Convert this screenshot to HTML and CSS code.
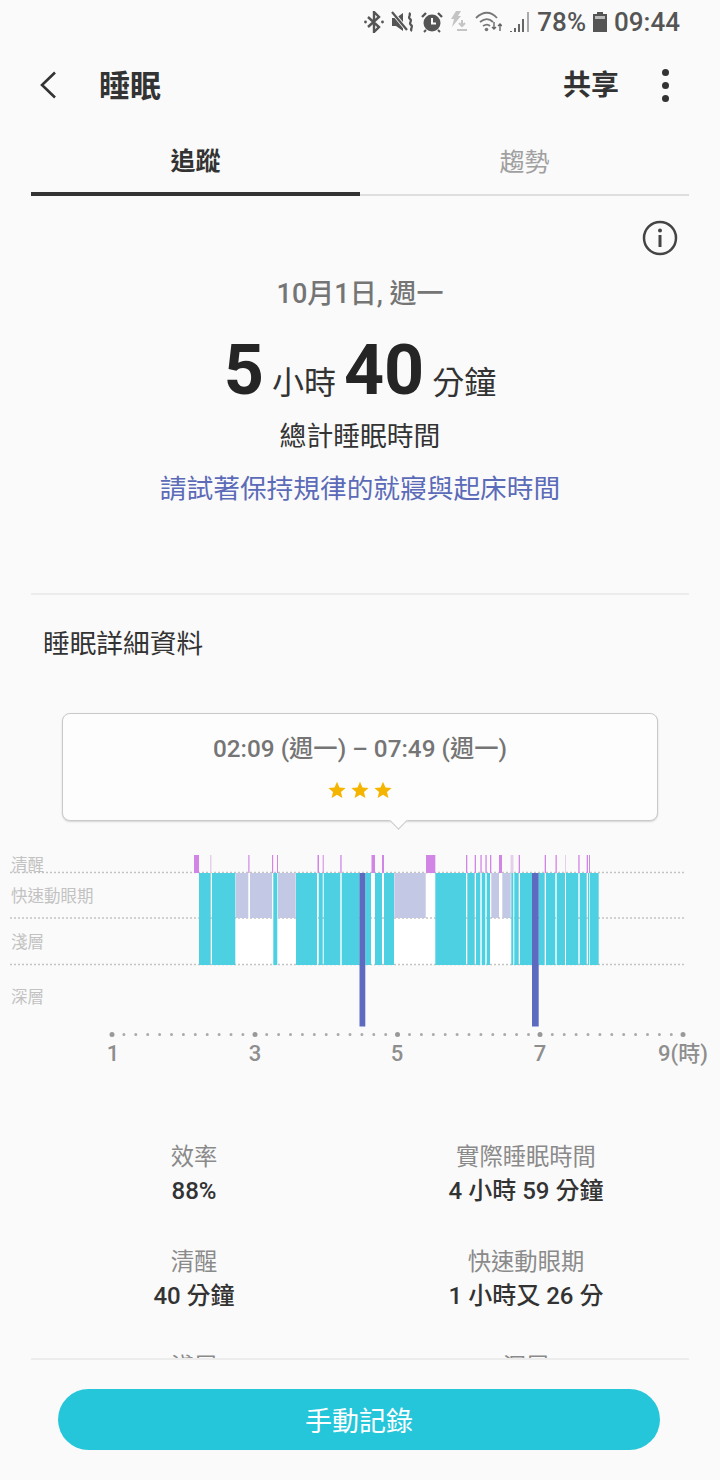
FILE: index.html
```html
<!DOCTYPE html>
<html lang="zh-Hant">
<head>
    <meta charset="UTF-8">
    <meta name="viewport" content="width=device-width, initial-scale=1.0">
    <title>睡眠</title>
    <link rel="stylesheet" href="styles.css">
</head>
<body>
    <div class="app">
        <!-- 狀態列 -->
        <div class="status-bar">
            <svg class="st-icon" width="20" height="22" viewBox="0 0 20 22"><path d="M4 6l11 10-5 5V1l5 5L4 16" fill="none" stroke="#555" stroke-width="2.4"/><circle cx="1.5" cy="11" r="1.4" fill="#555"/><circle cx="18.5" cy="11" r="1.4" fill="#555"/></svg>
            <svg class="st-icon" width="23" height="22" viewBox="0 0 23 22"><path d="M1 7h4l7-5v18l-7-5H1z" fill="#555"/><path d="M2 2l14 17" stroke="#fafafa" stroke-width="4"/><path d="M1 1l15 18" stroke="#555" stroke-width="2.200"/><path d="M18 2c3 2-2 4 1 6s-2 4 1 6-2 4 1 6" fill="none" stroke="#555" stroke-width="2.200"/></svg>
            <svg class="st-icon" width="22" height="22" viewBox="0 0 22 22"><circle cx="11" cy="12" r="8.5" fill="#555"/><path d="M11 7v5.5h4" fill="none" stroke="#fafafa" stroke-width="2"/><path d="M1 6l4-4M21 6l-4-4" stroke="#555" stroke-width="2.4"/><path d="M5 19l-2 2M17 19l2 2" stroke="#555" stroke-width="2"/></svg>
            <svg class="st-icon" width="18" height="22" viewBox="0 0 18 22"><path d="M6 0h5L8 5h3L2 16l2-8H1z" fill="#c4c4c4"/><path d="M12 9v5M9 12l3 3 3-3M7 19h10" fill="none" stroke="#c4c4c4" stroke-width="2"/></svg>
            <svg class="st-icon" width="27" height="22" viewBox="0 0 27 22"><path d="M1 7c7-7 15-7 21 0M5 11c5-4 9-4 13 0M8 15c3-2 5-2 7 0" fill="none" stroke="#777" stroke-width="1.8"/><circle cx="11.500" cy="18.500" r="1.800" fill="#777"/><path d="M19 11v7M17 16l2 2 2-2M25 20v-7M23 15l2-2 2 2" fill="none" stroke="#666" stroke-width="1.4"/></svg>
            <svg class="st-icon" width="21" height="22" viewBox="0 0 21 22"><path d="M1 20h2v1H1zM5 17h2v4H5zM9 13h2v8H9zM13 8h2v13h-2z" fill="#666"/><path d="M18 1h2v20h-2z" fill="#aaa"/></svg>
            <span class="st-text st-percent">78%</span>
            <svg class="st-icon" width="14" height="20" viewBox="0 0 14 20"><path d="M4 0h6v2h4v18H0V2h4z" fill="#555"/><path d="M2 4h10v3H2z" fill="#bbb"/></svg>
            <span class="st-text st-clock">09:44</span>
        </div>

        <!-- 標題列 -->
        <div class="top-bar">
            <svg class="back" width="18" height="28" viewBox="0 0 18 28"><path d="M16 1.500L3 14l13 12.500" fill="none" stroke="#333" stroke-width="2.600"/></svg>
            <div class="title">睡眠</div>
            <div class="share">共享</div>
            <div class="more"><span></span><span></span><span></span></div>
        </div>

        <!-- 分頁 -->
        <div class="tabs">
            <div class="tab tab-active">追蹤</div>
            <div class="tab">趨勢</div>
        </div>

        <div class="content">
            <div class="info-row">
                <svg width="36" height="36" viewBox="0 0 36 36"><circle cx="18" cy="18" r="16" fill="none" stroke="#444" stroke-width="2.500"/><circle cx="18" cy="10.500" r="2" fill="#444"/><path d="M18 15v12" stroke="#444" stroke-width="3"/></svg>
            </div>

            <div class="summary">
                <div class="date">10月1日, 週一</div>
                <div class="total"><b>5</b> 小時 <b>40</b> 分鐘</div>
                <div class="total-label">總計睡眠時間</div>
                <div class="tip">請試著保持規律的就寢與起床時間</div>
            </div>

            <div class="details">
                <h2 class="details-title">睡眠詳細資料</h2>

                <div class="bubble">
                    <div class="bubble-time">02:09 (週一) – 07:49 (週一)</div>
                    <div class="stars">
                        <svg width="18" height="18" viewBox="0 0 24 24"><path d="M12 1l3.300 7.500 8.200.8-6.200 5.400 1.900 8L12 18.400 4.800 22.700l1.900-8L.5 9.300l8.200-.8z" fill="#f5b400"/></svg>
                        <svg width="18" height="18" viewBox="0 0 24 24"><path d="M12 1l3.300 7.500 8.200.8-6.200 5.400 1.900 8L12 18.400 4.800 22.700l1.900-8L.5 9.300l8.200-.8z" fill="#f5b400"/></svg>
                        <svg width="18" height="18" viewBox="0 0 24 24"><path d="M12 1l3.300 7.500 8.200.8-6.200 5.400 1.900 8L12 18.400 4.800 22.700l1.900-8L.5 9.300l8.200-.8z" fill="#f5b400"/></svg>
                    </div>
                </div>

                <!-- 圖表：viewBox 用頁面座標 -->
                <svg class="chart" width="720" height="226" viewBox="0 850 720 226">
                    <rect x="199" y="873" width="400" height="92" fill="#fff"/>
                    <path class="grid" d="M10 872.500H684M10 918H684M10 964.500H684"/>

                    <text class="y-label" x="11" y="871">清醒</text>
                    <text class="y-label" x="11" y="902">快速動眼期</text>
                    <text class="y-label" x="11" y="948">淺層</text>
                    <text class="y-label" x="11" y="1003">深層</text>

                    <g class="awake">
                        <rect x="194" y="855" width="5" height="18"/>
                        <rect class="faint" x="210" y="855" width="1.500" height="18"/>
                        <rect x="248.300" y="855" width="1.200" height="18"/>
                        <rect x="272" y="855" width="1.200" height="18"/>
                        <rect x="277" y="855" width="1" height="18"/>
                        <rect x="317.500" y="855" width="1.500" height="18"/>
                        <rect x="322.700" y="855" width="1" height="18"/>
                        <rect x="340.300" y="855" width="1.300" height="18"/>
                        <rect x="371.500" y="855" width="3.500" height="18"/>
                        <rect x="382" y="855" width="2" height="18"/>
                        <rect x="426" y="855" width="9.300" height="18"/>
                        <rect x="466" y="855" width="1.300" height="18"/>
                        <rect x="474.700" y="855" width="1.300" height="18"/>
                        <rect x="480.400" y="855" width="1.300" height="18"/>
                        <rect x="485.400" y="855" width="1.300" height="18"/>
                        <rect x="490" y="855" width="1.300" height="18"/>
                        <rect x="499" y="855" width="3" height="18"/>
                        <rect class="faint" x="510.500" y="855" width="3" height="18"/>
                        <rect x="518.700" y="855" width="1.300" height="18"/>
                        <rect x="544.700" y="855" width="1.300" height="18"/>
                        <rect x="555.500" y="855" width="1.300" height="18"/>
                        <rect class="faint" x="565" y="855" width="1" height="18"/>
                        <rect x="578.300" y="855" width="1.300" height="18"/>
                        <rect x="586.700" y="855" width="1.300" height="18"/>
                        <rect x="589" y="855" width="1" height="18"/>
                    </g>

                    <g class="rem">
                        <rect x="235.700" y="873" width="12.600" height="45"/>
                        <rect x="250" y="873" width="22" height="45"/>
                        <rect x="278" y="873" width="17.700" height="45"/>
                        <rect x="394.300" y="873" width="31.400" height="45"/>
                        <rect x="491.300" y="873" width="7.700" height="45"/>
                        <rect x="502.300" y="873" width="8.400" height="45"/>
                    </g>

                    <g class="light">
                        <rect x="199" y="873" width="11.700" height="92"/>
                        <rect x="212" y="873" width="23.300" height="92"/>
                        <rect x="273.300" y="873" width="4" height="92"/>
                        <rect x="296" y="873" width="21" height="92"/>
                        <rect x="318.700" y="873" width="4" height="92"/>
                        <rect x="323.700" y="873" width="16.600" height="92"/>
                        <rect x="341.700" y="873" width="18" height="92"/>
                        <rect x="365.300" y="873" width="5.700" height="92"/>
                        <rect x="375" y="873" width="7" height="92"/>
                        <rect x="384" y="873" width="10" height="92"/>
                        <rect x="435.300" y="873" width="30.700" height="92"/>
                        <rect x="467.300" y="873" width="7.400" height="92"/>
                        <rect x="476" y="873" width="4.300" height="92"/>
                        <rect x="481.700" y="873" width="3.600" height="92"/>
                        <rect x="486.700" y="873" width="3.300" height="92"/>
                        <rect x="511.300" y="873" width="2" height="92"/>
                        <rect x="514.300" y="873" width="4.400" height="92"/>
                        <rect x="520" y="873" width="12" height="92"/>
                        <rect x="538.700" y="873" width="6" height="92"/>
                        <rect x="546" y="873" width="9.300" height="92"/>
                        <rect x="556.700" y="873" width="8.300" height="92"/>
                        <rect x="566" y="873" width="12.300" height="92"/>
                        <rect x="579.700" y="873" width="7" height="92"/>
                        <rect x="588" y="873" width="1.300" height="92"/>
                        <rect x="590" y="873" width="8.700" height="92"/>
                    </g>

                    <g class="deep">
                        <rect x="359.500" y="873" width="5.800" height="153.500"/>
                        <rect x="532" y="873" width="6.700" height="153.500"/>
                    </g>

                    <path class="axis-dots" d="M112 1034.500H683"/>
                    <g class="axis-major">
                        <circle cx="112" cy="1034.500" r="2.500"/>
                        <circle cx="255" cy="1034.500" r="2.500"/>
                        <circle cx="397.500" cy="1034.500" r="2.500"/>
                        <circle cx="540" cy="1034.500" r="2.500"/>
                        <circle cx="683" cy="1034.500" r="2.500"/>
                    </g>
                    <text class="x-label" x="113" y="1061">1</text>
                    <text class="x-label" x="255" y="1061">3</text>
                    <text class="x-label" x="397" y="1061">5</text>
                    <text class="x-label" x="540" y="1061">7</text>
                    <text class="x-label" x="683" y="1061">9(時)</text>
                </svg>

                <div class="stats">
                    <div class="stat"><div class="stat-name">效率</div><div class="stat-value">88%</div></div>
                    <div class="stat"><div class="stat-name">實際睡眠時間</div><div class="stat-value">4 小時 59 分鐘</div></div>
                    <div class="stat"><div class="stat-name">清醒</div><div class="stat-value">40 分鐘</div></div>
                    <div class="stat"><div class="stat-name">快速動眼期</div><div class="stat-value">1 小時又 26 分</div></div>
                    <div class="stat"><div class="stat-name">淺層</div><div class="stat-value">2 小時又 53 分</div></div>
                    <div class="stat"><div class="stat-name">深層</div><div class="stat-value">40 分鐘</div></div>
                </div>
            </div>
        </div>

        <!-- 底部按鈕 -->
        <div class="bottom">
            <button class="manual-btn">手動記錄</button>
        </div>
    </div>
</body>
</html>
```

FILE: styles.css
```css
* {
    box-sizing: border-box;
}
body {
    margin: 0;
    background-color: #fafafa;
    font-family: Roboto, "Noto Sans CJK TC", sans-serif;
    color: #333;
}
.app {
    width: 720px;
    height: 1480px;
    display: flex;
    flex-direction: column;
    overflow: hidden;
}

/* status bar */
.status-bar {
    height: 44px;
    flex: none;
    display: flex;
    align-items: center;
    justify-content: flex-end;
    padding: 0 40px 1px 0;
    gap: 7px;
    color: #555;
}
.st-icon {
    flex: none;
}
.st-text {
    font-size: 26px;
    font-weight: 500;
    line-height: 30px;
}

/* top bar */
.top-bar {
    height: 82px;
    flex: none;
    display: flex;
    align-items: center;
    padding: 0 51px 0 39px;
}
.back {
    flex: none;
}
.title {
    margin-left: 42px;
    padding-bottom: 4px;
    font-size: 31px;
    font-weight: 700;
    flex: 1;
}
.share {
    padding-bottom: 4px;
    font-size: 28px;
    font-weight: 700;
}
.more {
    margin-left: 43px;
    display: flex;
    flex-direction: column;
    gap: 6px;
}
.more span {
    display: block;
    width: 7px;
    height: 7px;
    border-radius: 50%;
    background-color: #333;
}

/* tabs */
.tabs {
    flex: none;
    height: 70px;
    margin: 0 31px;
    display: flex;
}
.tab {
    flex: 1;
    display: flex;
    align-items: center;
    justify-content: center;
    font-size: 25px;
    font-weight: 400;
    color: #a0a0a0;
    border-bottom: 2px solid #dedede;
}
.tab-active {
    color: #333;
    font-weight: 700;
    border-bottom: 4px solid #333;
}

/* main content */
.content {
    flex: 1;
    min-height: 0;
    overflow: hidden;
}
.info-row {
    display: flex;
    justify-content: flex-end;
    padding: 24px 42px 0 0;
    height: 60px;
}
.summary {
    margin: 0 31px;
    height: 339px;
    border-bottom: 2px solid #ececec;
    text-align: center;
}
.date {
    padding-top: 20px;
    font-size: 27px;
    line-height: 36px;
    font-weight: 500;
    color: #757575;
}
.total {
    margin-top: 23px;
    font-size: 32px;
    line-height: 70px;
    font-weight: 400;
    color: #333;
}
.total b {
    font-size: 70px;
    font-weight: 700;
    color: #252525;
}
.total-label {
    font-size: 26.8px;
    line-height: 38px;
}
.tip {
    margin-top: 14px;
    font-size: 26.7px;
    line-height: 38px;
    color: #5c6bb8;
}

/* details */
.details-title {
    margin: 0;
    padding: 31px 0 0 43px;
    font-size: 26.7px;
    line-height: 36px;
    font-weight: 400;
}
.bubble {
    position: relative;
    margin: 51px 62px 0;
    height: 108px;
    background-color: #fdfdfd;
    border: 1.5px solid #c9c9c9;
    border-radius: 8px;
    box-shadow: 0 1px 2px rgba(0, 0, 0, 0.15);
    text-align: center;
}
.bubble::after {
    content: "";
    position: absolute;
    left: 329px;
    bottom: -7px;
    width: 12px;
    height: 12px;
    background-color: #fdfdfd;
    border-right: 1.5px solid #c9c9c9;
    border-bottom: 1.5px solid #c9c9c9;
    transform: rotate(45deg);
}
.bubble-time {
    padding-top: 18px;
    font-size: 24.3px;
    line-height: 34px;
    font-weight: 500;
    color: #757575;
}
.stars {
    margin-top: 15px;
    display: flex;
    justify-content: center;
    gap: 5px;
}
.chart {
    display: block;
    margin-top: 29px;
}
.chart text {
    font-family: Roboto, "Noto Sans CJK TC", sans-serif;
}
.grid {
    fill: none;
    stroke: #c4c4c4;
    stroke-width: 1.5;
    stroke-dasharray: 2 2;
}
.y-label {
    font-size: 16.5px;
    fill: #c2c2c2;
}
.awake rect {
    fill: #d186e6;
}
.awake .faint {
    fill: #e6cfe9;
}
.rem rect {
    fill: #c3c8e4;
}
.light rect {
    fill: #4dd0e1;
}
.deep rect {
    fill: #5c6bc0;
}
.axis-dots {
    fill: none;
    stroke: #aaa;
    stroke-width: 3;
    stroke-linecap: round;
    stroke-dasharray: 0 11.9;
}
.axis-major circle {
    fill: #999;
}
.x-label {
    font-size: 22px;
    font-weight: 500;
    fill: #8e8e8e;
    text-anchor: middle;
}

/* stats */
.stats {
    display: grid;
    grid-template-columns: 332px 332px;
    justify-content: start;
    padding-left: 28px;
    margin-top: 64px;
    row-gap: 37px;
    text-align: center;
}
.stat-name {
    font-size: 23.3px;
    line-height: 35px;
    color: #8a8a8a;
}
.stat-value {
    font-size: 24px;
    line-height: 33px;
    font-weight: 500;
    color: #333;
}

/* bottom */
.bottom {
    flex: none;
    height: 122px;
    margin: 0 31px;
    padding: 29px 0 0 27px;
    border-top: 2px solid #ececec;
    display: flex;
}
.manual-btn {
    width: 602px;
    height: 61px;
    border: none;
    border-radius: 31px;
    background-color: #26c6da;
    color: #fff;
    font-family: Roboto, "Noto Sans CJK TC", sans-serif;
    font-size: 27px;
}
```
